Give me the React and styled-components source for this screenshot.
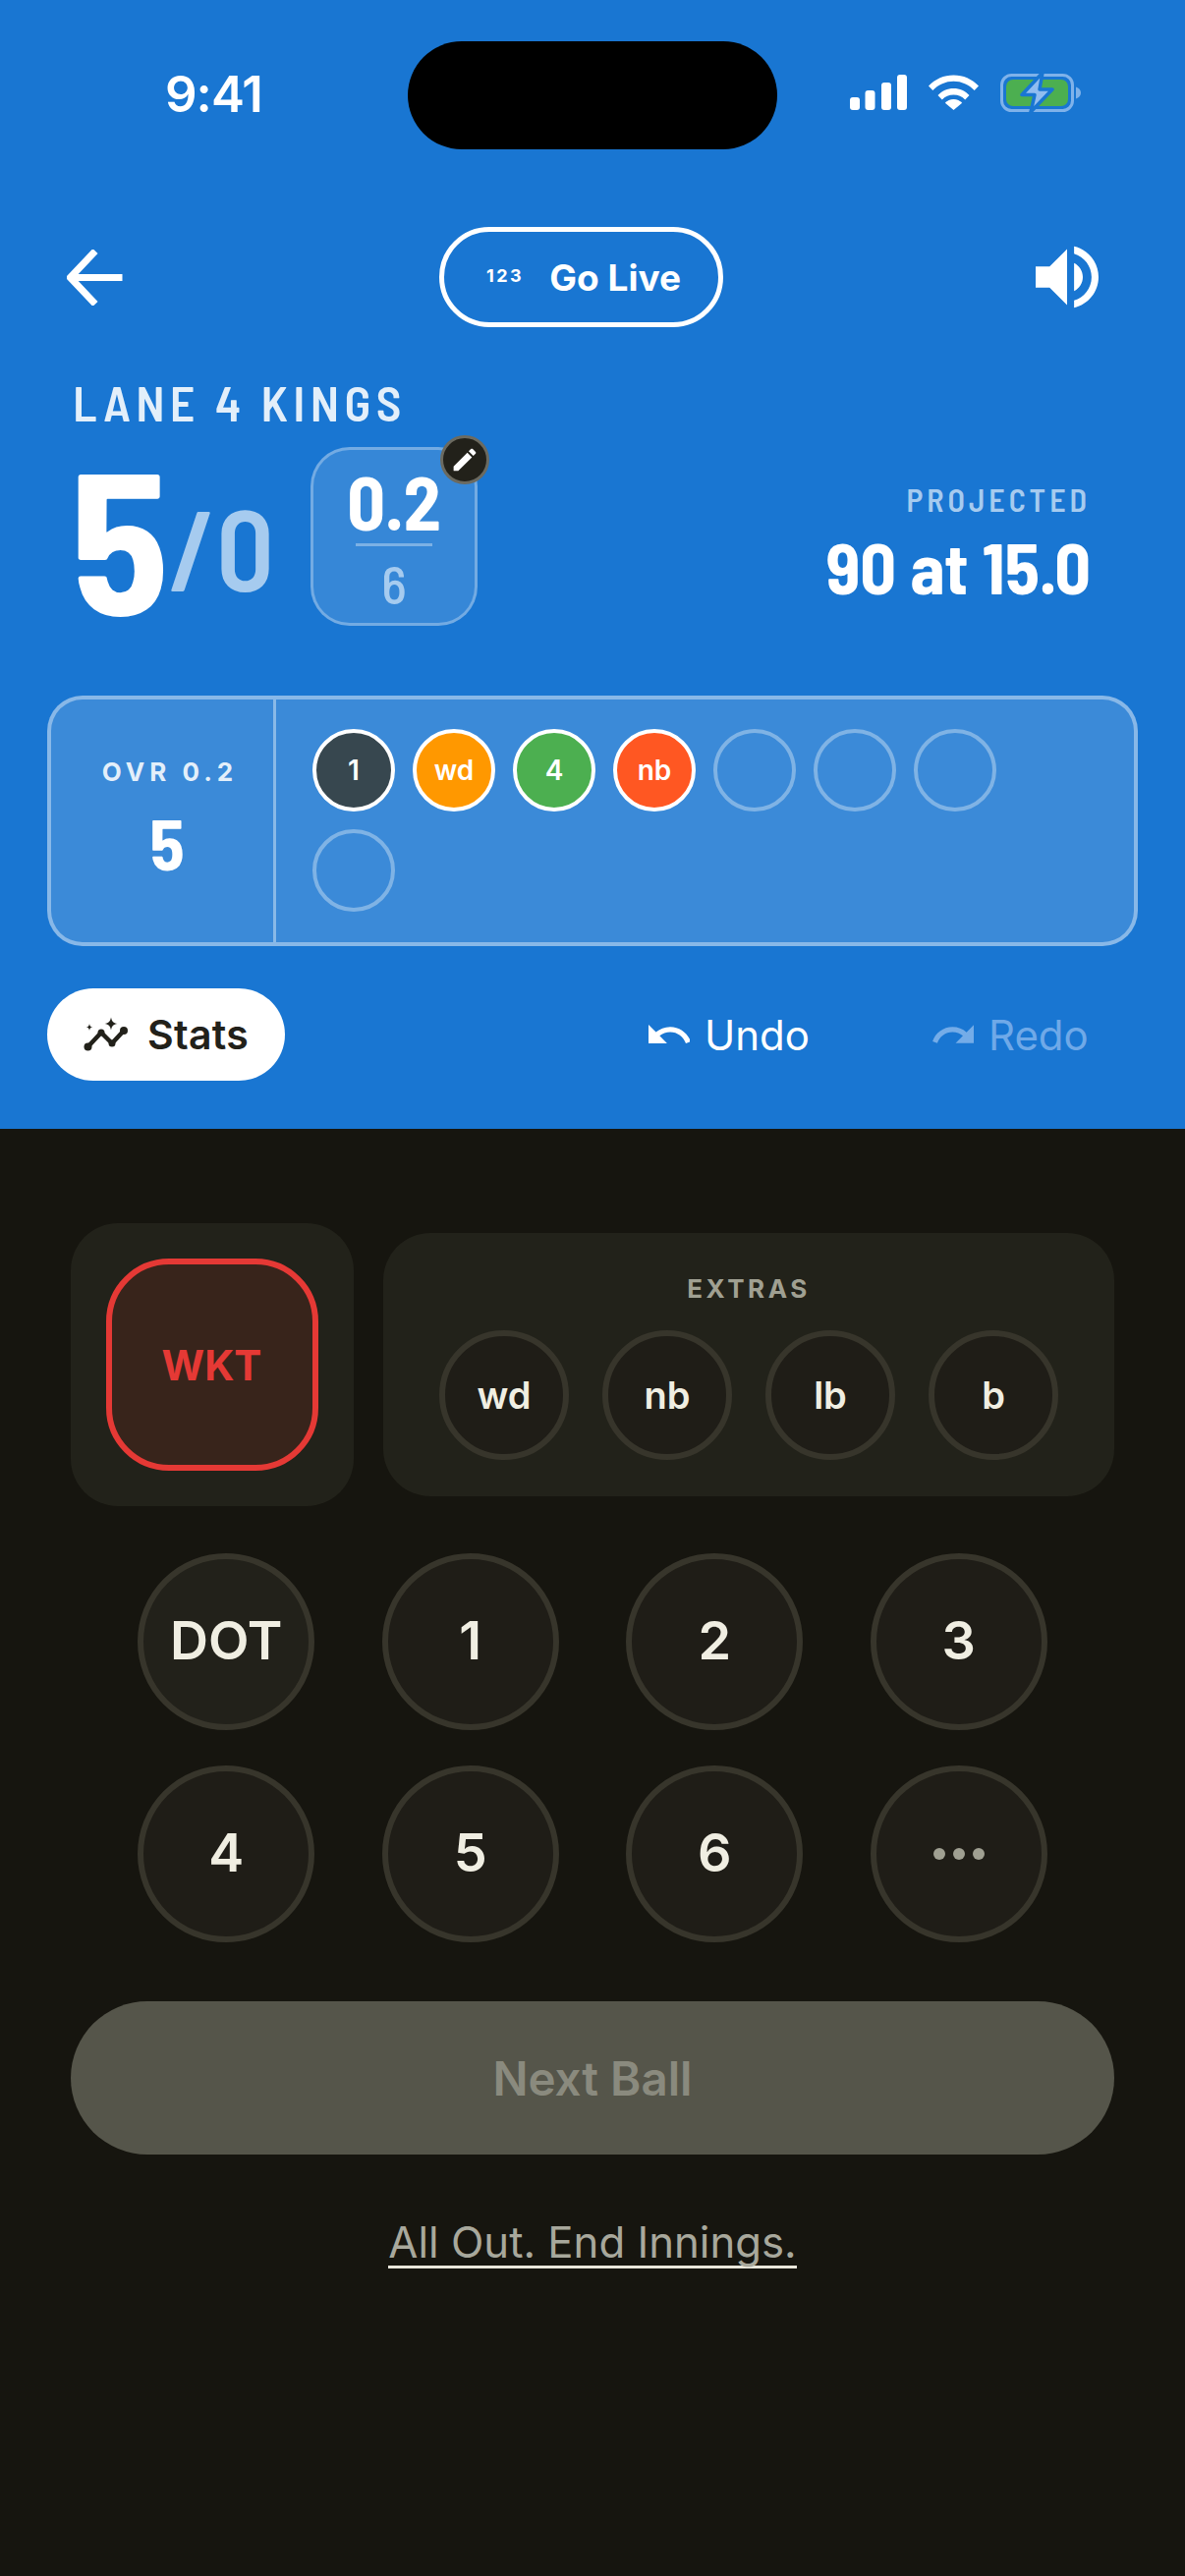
import styled, { createGlobalStyle } from "styled-components";

const condensed = `"Barlow Semi Condensed", "Barlow", "Roboto Condensed", "Liberation Sans Narrow", "Roboto", sans-serif`;

const GlobalStyle = createGlobalStyle`
    html, body {
        margin: 0;
        padding: 0;
        background: #16150f;
        font-family: "Inter", "Liberation Sans", sans-serif;
    }
`;

const balls = [
    { label: "1", color: "#37474f" },
    { label: "wd", color: "#ff9800" },
    { label: "4", color: "#4caf50" },
    { label: "nb", color: "#ff5722" },
    {}, {}, {}, {},
];
const extras = ["wd", "nb", "lb", "b"];
const runs = ["DOT", "1", "2", "3", "4", "5", "6"];

function BackIcon() {
    return (
        <svg width="57" height="57" viewBox="0 0 57 57" fill="none" stroke="#fff" strokeWidth="7">
            <path d="M56.5 28.5H4" />
            <path d="M29 1.5 3.5 28.5 29 55.5" />
        </svg>
    );
}

function VolumeIcon() {
    return (
        <svg width="64" height="66" viewBox="3 2.8 18 18.4" fill="#fff">
            <path d="M3 9v6h4l5 5V4L7 9H3zm13.5 3c0-1.77-1.02-3.29-2.5-4.03v8.05c1.48-.73 2.5-2.25 2.5-4.02zM14 3.23v2.06c2.89.86 5 3.54 5 6.71s-2.11 5.85-5 6.71v2.06c4.01-.91 7-4.49 7-8.77s-2.99-7.86-7-8.77z" />
        </svg>
    );
}

function SignalIcon() {
    return (
        <svg width="58" height="36" viewBox="0 0 58 36" fill="#fff">
            <rect x="0" y="23" width="10" height="13" rx="3" />
            <rect x="15.5" y="16" width="10" height="20" rx="3" />
            <rect x="32" y="8" width="10" height="28" rx="3" />
            <rect x="48" y="0" width="10" height="36" rx="3" />
        </svg>
    );
}

function WifiIcon() {
    return (
        <svg width="51" height="36" viewBox="0 0 51 36" fill="#fff">
            <path d="M0 11.5C6.8 4.4 15.6.5 25.5.5S44.200 4.400 51 11.500l-4.300 4.500C41 10.200 33.600 6.800 25.500 6.800S10 10.200 4.300 16z" />
            <path d="M9.500 21C13.600 16.600 19.300 14 25.500 14s11.900 2.600 16 7l-4.300 4.500c-3-3.200-7.100-5-11.700-5s-8.700 1.800-11.700 5z" />
            <path d="M16.800 28.700c2.200-2.300 5.300-3.700 8.700-3.700s6.500 1.400 8.700 3.700L25.500 36z" />
        </svg>
    );
}

function BatteryIcon() {
    return (
        <svg width="84" height="42" viewBox="0 0 84 42" fill="none">
            <rect x="1.500" y="3.500" width="72" height="36" rx="10" stroke="#7fb2ea" strokeWidth="3" />
            <rect x="6" y="8" width="63" height="27" rx="7" fill="#4caf50" />
            <path d="M77 15.500c3 1 5 3 5 6s-2 5-5 6z" fill="#7fb2ea" />
            <path d="M43 1 22 23.500h13L31 41l22-23H40z" fill="#90bdf0" stroke="#1976d2" strokeWidth="3.500" strokeLinejoin="round" />
        </svg>
    );
}

function PencilIcon() {
    return (
        <svg width="24" height="24" viewBox="2.500 2.500 19 19" fill="#fff">
            <path d="M3 17.250V21h3.750L17.810 9.940l-3.750-3.750L3 17.250zM20.710 7.040c.39-.39.39-1.020 0-1.410l-2.340-2.340c-.39-.39-1.020-.39-1.410 0l-1.830 1.830 3.750 3.750 1.830-1.830z" />
        </svg>
    );
}

function StatsIcon() {
    return (
        <svg width="46" height="38" viewBox="0 0 46 38" fill="#22211a">
            <path d="M4 32 18 17l11 11 12-13" fill="none" stroke="#22211a" strokeWidth="4.500" strokeLinejoin="round" />
            <circle cx="4.500" cy="31.500" r="4" />
            <circle cx="18" cy="17" r="3.500" />
            <circle cx="29" cy="28" r="3.500" />
            <circle cx="41" cy="15" r="4" />
            <path d="M28 1.500c.9 4.300 2.200 5.700 6.500 6.500-4.300.9-5.600 2.200-6.500 6.500-.9-4.300-2.200-5.600-6.500-6.500 4.300-.8 5.600-2.200 6.500-6.500z" />
            <path d="M6 8c.4 2.600 1 3.200 3.500 3.500C7 11.900 6.400 12.500 6 15c-.4-2.500-1-3.100-3.500-3.500C5 11.200 5.600 10.600 6 8z" />
        </svg>
    );
}

function UndoIcon({ color }) {
    return (
        <svg width="42" height="20" viewBox="2 7 20 9.500" fill={color}>
            <path d="M12.500 8c-2.650 0-5.050.99-6.900 2.600L2 7v9h9l-3.620-3.620c1.390-1.160 3.160-1.880 5.120-1.880 3.540 0 6.550 2.310 7.600 5.500l2.370-.78C21.080 11.030 17.150 8 12.500 8z" />
        </svg>
    );
}

function RedoIcon({ color }) {
    return (
        <svg width="42" height="20" viewBox="1.500 7 20.500 9.500" fill={color}>
            <path d="M18.400 10.600C16.550 8.990 14.150 8 11.500 8c-4.650 0-8.580 3.030-9.960 7.220L3.900 16c1.050-3.190 4.050-5.500 7.600-5.500 1.950 0 3.730.72 5.120 1.880L13 16h9V7l-3.600 3.600z" />
        </svg>
    );
}

export default function App() {
    return (
        <Page>
            <GlobalStyle />
            <TopPanel>
                <StatusBar>
                    <Time>9:41</Time>
                    <Island />
                    <StatusIcons>
                        <SignalIcon />
                        <WifiIcon />
                        <BatteryIcon />
                    </StatusIcons>
                </StatusBar>

                <Header>
                    <BackIcon />
                    <GoLive>
                        <LiveBadge>123</LiveBadge>
                        Go Live
                    </GoLive>
                    <VolumeIcon />
                </Header>

                <TeamName>LANE 4 KINGS</TeamName>

                <ScoreRow>
                    <Runs>5</Runs>
                    <Wickets>/0</Wickets>
                    <OversBox>
                        <OversDone>0.2</OversDone>
                        <OversLine />
                        <OversTotal>6</OversTotal>
                        <EditBadge><PencilIcon /></EditBadge>
                    </OversBox>
                    <Projected>
                        <ProjectedLabel>PROJECTED</ProjectedLabel>
                        <ProjectedValue>90 at 15.0</ProjectedValue>
                    </Projected>
                </ScoreRow>

                <OverCard>
                    <OverInfo>
                        <OverLabel>OVR 0.2</OverLabel>
                        <OverRuns>5</OverRuns>
                    </OverInfo>
                    <BallList>
                        {balls.map((ball, index) => (
                            <Ball key={index} $color={ball.color}>{ball.label}</Ball>
                        ))}
                    </BallList>
                </OverCard>

                <ActionRow>
                    <StatsButton><StatsIcon />Stats</StatsButton>
                    <TextAction $left={370} $color="#fff"><UndoIcon color="#fff" />Undo</TextAction>
                    <TextAction $left={125} $color="#6fa9e8"><RedoIcon color="#74ace8" />Redo</TextAction>
                </ActionRow>
            </TopPanel>

            <BottomPanel>
                <TopControls>
                    <WicketPanel>
                        <WicketButton>WKT</WicketButton>
                    </WicketPanel>
                    <ExtrasPanel>
                        <ExtrasTitle>EXTRAS</ExtrasTitle>
                        <ExtrasRow>
                            {extras.map(item => <ExtraButton key={item}>{item}</ExtraButton>)}
                        </ExtrasRow>
                    </ExtrasPanel>
                </TopControls>

                <RunGrid>
                    {runs.map(item => <RunButton key={item} $active={item === "DOT"}>{item}</RunButton>)}
                    <RunButton>
                        <Dots><i /><i /><i /></Dots>
                    </RunButton>
                </RunGrid>

                <NextBall>Next Ball</NextBall>
                <EndInnings>All Out. End Innings.</EndInnings>
            </BottomPanel>
        </Page>
    );
}

const Page = styled.div`
    width: 1206px;
    min-height: 2622px;
    background: #16150f;
    overflow: hidden;
`;

const TopPanel = styled.div`
    height: 1149px;
    background: #1976d2;
    box-sizing: border-box;
    padding-top: 42px;
`;

const StatusBar = styled.div`
    display: grid;
    grid-template-columns: 415px 376px 1fr;
    align-items: center;
    height: 110px;
`;

const Time = styled.div`
    padding-left: 168px;
    color: #fff;
    font-size: 51px;
    font-weight: 600;
    letter-spacing: -1px;
    margin-top: -4px;
`;

const Island = styled.div`
    height: 110px;
    background: #000;
    border-radius: 55px;
`;

const StatusIcons = styled.div`
    display: flex;
    align-items: center;
    gap: 22px;
    padding-left: 74px;
    margin-top: -6px;
`;

const Header = styled.div`
    display: flex;
    align-items: center;
    justify-content: space-between;
    margin-top: 79px;
    padding: 0 88px 0 68px;
`;

const GoLive = styled.div`
    display: flex;
    align-items: center;
    justify-content: center;
    gap: 26px;
    width: 289px;
    height: 102px;
    margin-left: 3px;
    padding-left: 6px;
    box-sizing: border-box;
    border: 5px solid #fff;
    border-radius: 51px;
    color: #fff;
    font-size: 37px;
    font-weight: 700;
`;

const LiveBadge = styled.span`
    font-size: 18px;
    font-weight: 700;
    letter-spacing: 2.500px;
    margin-top: -4px;
`;

const TeamName = styled.div`
    margin-top: 46px;
    padding-left: 74px;
    color: #e3effa;
    font-family: ${condensed};
    font-size: 50px;
    font-weight: 600;
    line-height: 60px;
    letter-spacing: 5.300px;
`;

const ScoreRow = styled.div`
    display: flex;
    align-items: flex-start;
    margin-top: 16px;
    padding: 0 96px 0 72px;
`;

const Runs = styled.div`
    color: #fff;
    font-family: ${condensed};
    font-size: 204px;
    font-weight: 700;
    line-height: 182px;
`;

const Wickets = styled.div`
    color: #a6cbef;
    font-family: ${condensed};
    font-size: 116px;
    font-weight: 600;
    line-height: 182px;
    margin-top: 10px;
`;

const OversBox = styled.div`
    position: relative;
    width: 170px;
    height: 182px;
    margin-left: 37px;
    box-sizing: border-box;
    padding-top: 17px;
    border: 3px solid rgba(255, 255, 255, 0.3);
    border-radius: 40px;
    background: rgba(255, 255, 255, 0.13);
    text-align: center;
`;

const OversDone = styled.div`
    color: #fff;
    font-family: ${condensed};
    font-size: 76px;
    font-weight: 700;
    line-height: 70px;
`;

const OversLine = styled.div`
    width: 78px;
    height: 3px;
    margin: 8px auto 0;
    background: rgba(255, 255, 255, 0.35);
`;

const OversTotal = styled.div`
    color: #a6cbef;
    font-family: ${condensed};
    font-size: 54px;
    font-weight: 500;
    line-height: 60px;
    margin-top: 8px;
`;

const EditBadge = styled.div`
    position: absolute;
    top: -15px;
    right: -15px;
    display: flex;
    align-items: center;
    justify-content: center;
    width: 50px;
    height: 50px;
    box-sizing: border-box;
    border: 3px solid #6b6a60;
    border-radius: 50%;
    background: #22211a;
`;

const Projected = styled.div`
    margin-left: auto;
    padding-top: 33px;
    text-align: right;
`;

const ProjectedLabel = styled.div`
    color: #a6cbef;
    font-family: ${condensed};
    font-size: 32px;
    font-weight: 600;
    line-height: 40px;
    letter-spacing: 4px;
`;

const ProjectedValue = styled.div`
    margin-top: 10px;
    color: #fff;
    font-family: ${condensed};
    font-size: 72px;
    font-weight: 700;
    line-height: 76px;
`;

const OverCard = styled.div`
    display: flex;
    width: 1110px;
    height: 255px;
    margin: 61px 0 0 48px;
    box-sizing: border-box;
    border: 4px solid rgba(255, 255, 255, 0.4);
    border-radius: 36px;
    background: rgba(255, 255, 255, 0.15);
`;

const OverInfo = styled.div`
    width: 229px;
    box-sizing: border-box;
    border-right: 3px solid rgba(255, 255, 255, 0.4);
    padding: 58px 0 0 10px;
    text-align: center;
`;

const OverLabel = styled.div`
    padding-left: 6px;
    color: #e3effa;
    font-size: 26px;
    font-weight: 700;
    line-height: 32px;
    letter-spacing: 5px;
`;

const OverRuns = styled.div`
    margin-top: 19px;
    color: #fff;
    font-family: ${condensed};
    font-size: 72px;
    font-weight: 700;
    line-height: 72px;
`;

const BallList = styled.div`
    display: flex;
    flex-wrap: wrap;
    align-content: flex-start;
    gap: 18px;
    width: 740px;
    padding: 30px 0 0 37px;
`;

const Ball = styled.div`
    display: flex;
    align-items: center;
    justify-content: center;
    width: 84px;
    height: 84px;
    box-sizing: border-box;
    border: 4px solid ${p => p.$color ? "#fff" : "rgba(255, 255, 255, 0.35)"};
    border-radius: 50%;
    background: ${p => p.$color || "transparent"};
    color: #fff;
    font-size: 28px;
    font-weight: 600;
`;

const ActionRow = styled.div`
    display: flex;
    align-items: center;
    margin: 43px 0 0 48px;
`;

const StatsButton = styled.div`
    display: flex;
    align-items: center;
    gap: 19px;
    width: 242px;
    height: 94px;
    box-sizing: border-box;
    padding-left: 37px;
    border-radius: 47px;
    background: #fff;
    color: #22211a;
    font-size: 41px;
    font-weight: 600;
    letter-spacing: 0.3px;
`;

const TextAction = styled.div`
    display: flex;
    align-items: center;
    gap: 15px;
    margin-left: ${p => p.$left}px;
    color: ${p => p.$color};
    font-size: 42px;
    font-weight: 400;
`;

const BottomPanel = styled.div`
    padding: 96px 72px 0;
`;

const TopControls = styled.div`
    display: flex;
    align-items: center;
    gap: 30px;
`;

const WicketPanel = styled.div`
    display: flex;
    align-items: center;
    justify-content: center;
    width: 288px;
    height: 288px;
    border-radius: 48px;
    background: #22221a;
`;

const WicketButton = styled.div`
    display: flex;
    align-items: center;
    justify-content: center;
    width: 216px;
    height: 216px;
    margin-right: 1px;
    box-sizing: border-box;
    border: 6px solid #e53935;
    border-radius: 64px;
    background: #38241b;
    color: #e53935;
    font-size: 42px;
    font-weight: 700;
`;

const ExtrasPanel = styled.div`
    flex: 1;
    height: 268px;
    box-sizing: border-box;
    padding-top: 40px;
    border-radius: 48px;
    background: #22221a;
`;

const ExtrasTitle = styled.div`
    color: #a0a092;
    font-size: 26px;
    font-weight: 700;
    line-height: 34px;
    letter-spacing: 3.500px;
    text-align: center;
`;

const ExtrasRow = styled.div`
    display: flex;
    justify-content: center;
    gap: 34px;
    margin-top: 25px;
`;

const ExtraButton = styled.div`
    display: flex;
    align-items: center;
    justify-content: center;
    width: 132px;
    height: 132px;
    box-sizing: border-box;
    border: 6px solid #37352b;
    border-radius: 50%;
    background: #1f1d17;
    color: #f0eee2;
    font-size: 38px;
    font-weight: 600;
`;

const RunGrid = styled.div`
    display: grid;
    grid-template-columns: repeat(4, 180px);
    justify-content: center;
    column-gap: 68.500px;
    row-gap: 36px;
    margin-top: 48px;
`;

const RunButton = styled.div`
    display: flex;
    align-items: center;
    justify-content: center;
    width: 180px;
    height: 180px;
    box-sizing: border-box;
    padding-bottom: 3px;
    border: 6px solid #37352b;
    border-radius: 50%;
    background: ${p => p.$active ? "#22211a" : "#1f1d17"};
    color: #f0eee2;
    font-size: 54px;
    font-weight: 600;
`;

const Dots = styled.div`
    display: flex;
    gap: 8px;
    margin-top: 3px;

    i {
        display: block;
        width: 12px;
        height: 12px;
        border-radius: 50%;
        background: #a0a092;
    }
`;

const NextBall = styled.div`
    display: flex;
    align-items: center;
    justify-content: center;
    height: 156px;
    margin-top: 60px;
    border-radius: 78px;
    background: #55554a;
    color: #8a8a7e;
    font-size: 47.500px;
    font-weight: 600;
`;

const EndInnings = styled.div`
    width: fit-content;
    margin: 66px auto 0;
    border-bottom: 3px solid #e8e6da;
    color: #a8a89c;
    font-size: 43.700px;
    font-weight: 400;
    line-height: 47px;
`;
